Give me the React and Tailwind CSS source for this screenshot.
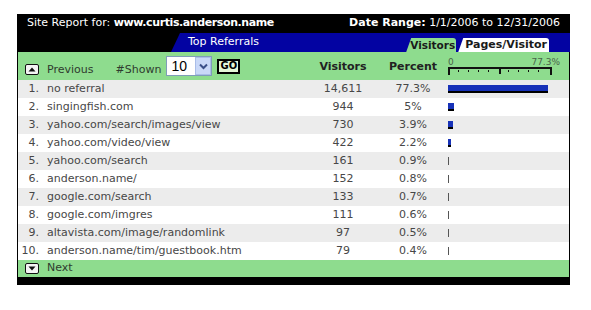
import React from 'react';

const rows = [
  { name: 'no referral', visitors: '14,611', pct: 77.3, label: '77.3%' },
  { name: 'singingfish.com', visitors: '944', pct: 5, label: '5%' },
  { name: 'yahoo.com/search/images/view', visitors: '730', pct: 3.9, label: '3.9%' },
  { name: 'yahoo.com/video/view', visitors: '422', pct: 2.2, label: '2.2%' },
  { name: 'yahoo.com/search', visitors: '161', pct: 0.9, label: '0.9%' },
  { name: 'anderson.name/', visitors: '152', pct: 0.8, label: '0.8%' },
  { name: 'google.com/search', visitors: '133', pct: 0.7, label: '0.7%' },
  { name: 'google.com/imgres', visitors: '111', pct: 0.6, label: '0.6%' },
  { name: 'altavista.com/image/randomlink', visitors: '97', pct: 0.5, label: '0.5%' },
  { name: 'anderson.name/tim/guestbook.htm', visitors: '79', pct: 0.4, label: '0.4%' },
];

// little boxed arrow used for Previous / Next
function ArrowBox({ down }) {
  return (
    <svg width="14" height="11" viewBox="0 0 14 11" className="shrink-0">
      <rect x="0.5" y="0.5" width="13" height="10" rx="1.5" fill="#f4f4f4" stroke="#111" />
      {down ? (
        <polygon points="3.5,3.5 10.5,3.5 7,7.5" fill="#111" />
      ) : (
        <polygon points="3.5,7.5 10.5,7.5 7,3.5" fill="#111" />
      )}
    </svg>
  );
}

function Ruler() {
  const dots = [10, 20, 30, 40, 60, 70, 80, 90];
  return (
    <svg width="104" height="8" viewBox="0 0 104 8">
      <rect x="0" y="0" width="104" height="2" fill="#111" />
      <rect x="0" y="0" width="2" height="8" fill="#111" />
      <rect x="102" y="0" width="2" height="8" fill="#111" />
      <rect x="51" y="0" width="2" height="7" fill="#111" />
      {dots.map((x) => (
        <rect key={x} x={x} y="3" width="1" height="2" fill="#111" />
      ))}
    </svg>
  );
}

export default function App() {
  return (
    <div className="min-h-screen bg-white pt-[14px] pl-[17px]" style={{ fontFamily: '"DejaVu Sans", Verdana, sans-serif' }}>
      <div className="w-[553px]">
        {/* Title bar */}
        <div className="h-[19px] bg-black flex items-center justify-between pl-[10px] pr-[10px] text-white text-[11px]">
          <span>
            Site Report for: <b className="tracking-[-0.4px]">www.curtis.anderson.name</b>
          </span>
          <span>
            <b>Date Range:</b> 1/1/2006 to 12/31/2006
          </span>
        </div>

        {/* Section bar with tabs */}
        <div className="h-[19px] bg-black flex pl-[154px]">
          <div className="flex-1 bg-[#0303a2] flex items-end [clip-path:polygon(9px_0,100%_0,100%_100%,0_100%)] rounded-tl-[8px]">
            <span className="self-center pl-[17px] text-white text-[11px]">Top Referrals</span>
            <div className="ml-auto mr-[21px] flex items-end gap-[2px]">
              <div className="h-[14px] pl-[4px] pr-[1px] bg-[#8edc8e] text-[10.5px] font-bold text-[#1a1a1a] leading-[14px] [clip-path:polygon(5px_0,100%_0,100%_100%,0_100%)] rounded-tr-[3px]">
                Visitors
              </div>
              <div className="h-[14px] pl-[7px] pr-[2px] bg-white text-[11px] font-bold text-[#1a1a1a] leading-[14px] [clip-path:polygon(5px_0,100%_0,100%_100%,0_100%)] rounded-tr-[3px]">
                Pages/Visitor
              </div>
            </div>
          </div>
        </div>

        <div className="border-x border-black">
          {/* Toolbar */}
          <div className="h-[28px] bg-[#8edc8e] flex items-center text-[11px] text-[#2f3b2f]">
            <div className="w-[289px] flex items-center">
              <div className="ml-[7px] translate-y-[3px]">
                <ArrowBox />
              </div>
              <span className="ml-[8px] translate-y-[4px]">Previous</span>
              <span className="ml-[22px] translate-y-[4px]">#Shown</span>
              <div className="ml-[5px] w-[46px] h-[20px] bg-white border border-[#7f9db9] flex items-center">
                <span className="flex-1 pl-[4px] text-[14px] text-black leading-none" style={{ fontFamily: '"Liberation Sans", Arial, sans-serif' }}>10</span>
                <div className="w-[16px] h-[18px] bg-[#c9d8f8] border border-[#a9bde8] flex items-center justify-center">
                  <svg width="9" height="7" viewBox="0 0 9 7">
                    <polyline points="1,1.5 4.5,5 8,1.5" fill="none" stroke="#3a4f88" strokeWidth="2" />
                  </svg>
                </div>
              </div>
              <div className="ml-[5px] w-[23px] h-[15px] border-2 border-black bg-[#e4f7d8] flex items-center justify-center text-[10px] font-bold text-black leading-none">
                GO
              </div>
            </div>
            <div className="w-[72px] text-center font-bold text-[#222] mt-[3px]">Visitors</div>
            <div className="w-[68px] text-center font-bold text-[#222] mt-[3px]">Percent</div>
            <div className="w-[112px] flex flex-col pl-[1px]">
              <div className="flex justify-between text-[9px] leading-[10px] text-[#4a644a] w-[112px]">
                <span>0</span>
                <span>77.3%</span>
              </div>
              <Ruler />
            </div>
          </div>

          {/* Rows */}
          {rows.map((r, i) => (
            <div
              key={r.name}
              className={`h-[18px] flex items-center text-[11px] text-[#474747] ${i % 2 === 0 ? 'bg-[#ececec]' : 'bg-white'}`}
            >
              <div className="w-[289px] flex">
                <span className="w-[21px] text-right">{i + 1}.</span>
                <span className="ml-[8px]">{r.name}</span>
              </div>
              <div className="w-[72px] text-center">{r.visitors}</div>
              <div className="w-[68px] text-center">{r.label}</div>
              <div className="flex-1 flex items-center pl-[1px]">
                <div
                  className={`h-[8px] ${r.pct > 1 ? 'bg-[#1732b8] border-b-2 border-black' : 'bg-[#555]'}`}
                  style={{ width: Math.max(1, Math.round((r.pct / 77.3) * 100)) + 'px' }}
                />
              </div>
            </div>
          ))}

          {/* Footer */}
          <div className="h-[17px] bg-[#8edc8e] flex items-center text-[11px] text-[#2f3b2f]">
            <div className="ml-[7px]">
              <ArrowBox down />
            </div>
            <span className="ml-[8px]">Next</span>
          </div>
        </div>
        <div className="h-[8px] bg-black" />
      </div>
    </div>
  );
}
